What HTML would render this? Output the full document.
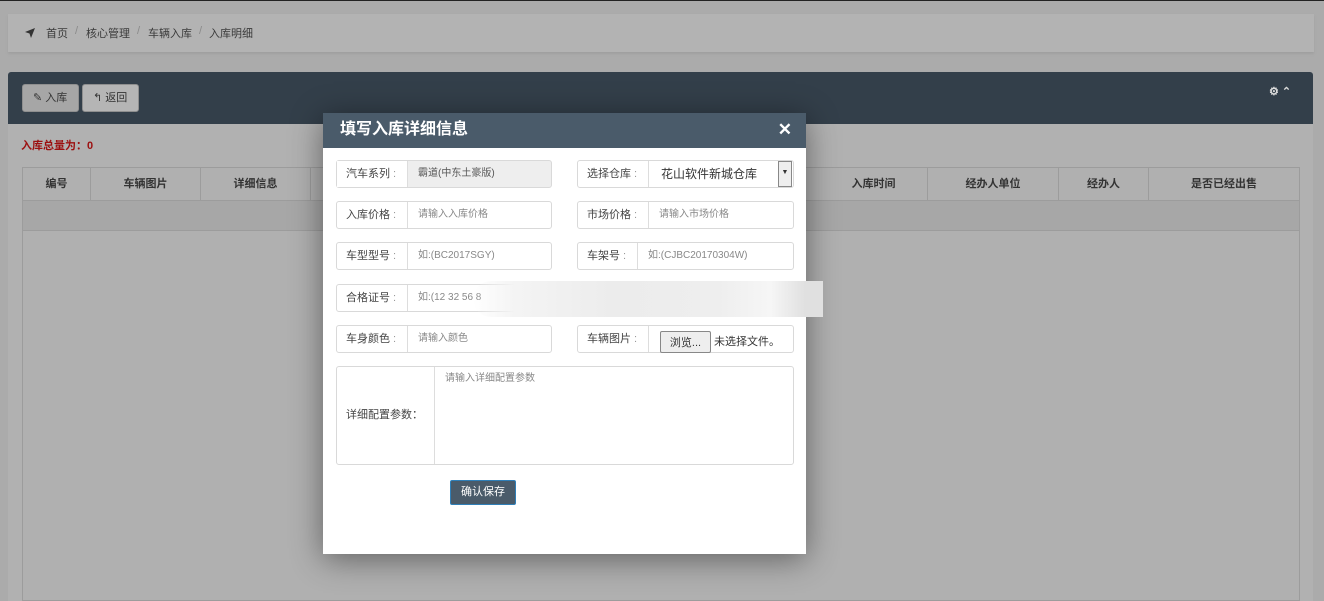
<!DOCTYPE html>
<html><head><meta charset="utf-8"><style>
*{box-sizing:border-box;margin:0;padding:0}
body{width:1324px;height:601px;overflow:hidden;background:#ababab;font-family:"Liberation Sans","Noto Sans CJK SC",sans-serif;font-size:12px;color:#333;position:relative}
.a{position:absolute}
.topline{left:0;top:0;width:1324px;height:1px;background:#222}
.bc{left:8px;top:14px;width:1306px;height:38px;background:#b3b3b3;box-shadow:0 2px 2px #a0a0a0}
.bc span{position:absolute;top:11px;font-size:11px;color:#3a3a3a;white-space:nowrap}
.bc .s{color:#8a8a8a}
.ph{left:8px;top:72px;width:1305px;height:52px;background:#333f4a;border-radius:3px 3px 0 0}
.pb{left:8px;top:124px;width:1305px;height:477px;background:#b1b1b1}
.btn{position:absolute;top:84px;height:28px;border:1px solid #8f8f8f;border-radius:3px;background:#b5b5b5;font-size:11px;color:#333;line-height:26px;padding-left:10px;white-space:nowrap}
.tot{left:21px;top:137px;color:#9c1010;font-weight:bold;font-size:11px}
.tbl{left:22px;top:167px;width:1278px;height:434px;border:1px solid #9c9c9c;background:#b0b0b0}
.th{position:absolute;top:0;height:32px;line-height:32px;text-align:center;font-weight:bold;color:#333;border-right:1px solid #9c9c9c;font-size:11px}
.row1{left:0;top:32px;width:1276px;height:31px;background:#a7a7a7;border-top:1px solid #9c9c9c;border-bottom:1px solid #9c9c9c}
.modal{left:323px;top:113px;width:483px;height:441px;background:#fff;box-shadow:0 5px 30px rgba(0,0,0,.45)}
.mh{left:0;top:0;width:483px;height:35px;background:#4a5b6a;color:#fff;font-size:16px;font-weight:bold;line-height:34px;padding-left:17px}
.x{right:14px;top:7px;color:#fff;font-size:17px;font-weight:bold;line-height:20px}
.ig{position:absolute;height:28px;border:1px solid #d9d9d9;border-radius:3px;background:#fff}
.lab{position:absolute;left:0;top:0;height:26px;border-right:1px solid #ddd;line-height:26px;font-size:11px;color:#444;padding-left:9px;white-space:nowrap}
.lab i{font-style:normal;color:#999}
.val{position:absolute;top:0;height:26px;line-height:26px;font-size:10px;color:#888;padding-left:10px;white-space:nowrap}
</style></head><body>
<div class="a topline"></div>
<div class="a bc">
<svg class="a" style="left:16px;top:13px" width="12" height="12" viewBox="0 0 12 12"><path d="M11 1L1 5l4.5 1.5L7 11z" fill="#333"/></svg>
<span style="left:38px">首页</span><span class="s" style="left:67px">/</span>
<span style="left:78px">核心管理</span><span class="s" style="left:129px">/</span>
<span style="left:140px">车辆入库</span><span class="s" style="left:191px">/</span>
<span style="left:201px">入库明细</span>
</div>
<div class="a ph"></div>
<div class="a pb"></div>
<div class="btn" style="left:22px;width:57px;background:#a6a6a6">✎ 入库</div>
<div class="btn" style="left:82px;width:57px">↰ 返回</div>
<div class="a" style="left:1269px;top:85px;color:#ddd;font-size:11px;font-weight:bold">⚙ ⌃</div>
<div class="a tot">入库总量为：0</div>
<div class="a tbl">
<div class="th" style="left:0;width:68px">编号</div>
<div class="th" style="left:68px;width:110px">车辆图片</div>
<div class="th" style="left:178px;width:110px">详细信息</div>
<div class="th" style="left:797px;width:108px">入库时间</div>
<div class="th" style="left:905px;width:131px">经办人单位</div>
<div class="th" style="left:1036px;width:90px">经办人</div>
<div class="th" style="left:1126px;width:150px;border-right:0">是否已经出售</div>
<div class="a row1"></div>
</div>
<div class="a modal">
<div class="a mh">填写入库详细信息</div>
<div class="a x">✕</div>
<div class="ig" style="left:13px;top:47px;width:216px;background:#eee"><div class="lab" style="width:71px;background:#fff">汽车系列<i> :</i></div><div class="val" style="left:71px;color:#555">霸道(中东土豪版)</div></div>
<div class="ig" style="left:254px;top:47px;width:217px"><div class="lab" style="width:71px">选择仓库<i> :</i></div><div class="val" style="left:73px;font-size:12px;color:#333">花山软件新城仓库</div><div class="a" style="right:1px;top:0;width:14px;height:26px;border:1px solid #888;background:#eee;font-size:7px;text-align:center;line-height:22px">▼</div></div>
<div class="ig" style="left:13px;top:88px;width:216px"><div class="lab" style="width:71px">入库价格<i> :</i></div><div class="val" style="left:71px">请输入入库价格</div></div>
<div class="ig" style="left:254px;top:88px;width:217px"><div class="lab" style="width:71px">市场价格<i> :</i></div><div class="val" style="left:71px">请输入市场价格</div></div>
<div class="ig" style="left:13px;top:129px;width:216px"><div class="lab" style="width:71px">车型型号<i> :</i></div><div class="val" style="left:71px">如:(BC2017SGY)</div></div>
<div class="ig" style="left:254px;top:129px;width:217px"><div class="lab" style="width:60px">车架号<i> :</i></div><div class="val" style="left:60px">如:(CJBC20170304W)</div></div>
<div class="ig" style="left:13px;top:171px;width:216px"><div class="lab" style="width:71px">合格证号<i> :</i></div><div class="val" style="left:71px">如:(12 32 56 8</div></div>
<div class="a" style="left:150px;top:168px;width:350px;height:36px;background:linear-gradient(90deg,rgba(255,255,255,0),#f4f4f4 12%,#ececec 40%,#eee 70%,#f6f6f6 85%,#e0e0e0 95%);border-radius:18px 0 0 18px"></div>
<div class="ig" style="left:13px;top:212px;width:216px"><div class="lab" style="width:71px">车身颜色<i> :</i></div><div class="val" style="left:71px">请输入颜色</div></div>
<div class="ig" style="left:254px;top:212px;width:217px"><div class="lab" style="width:71px">车辆图片<i> :</i></div><div class="a" style="left:82px;top:5px;width:51px;height:22px;border:1px solid #888;border-radius:2px;background:#eee;font-size:11px;line-height:22px;text-align:center">浏览...</div><div class="val" style="left:126px;top:3px;font-size:11px;color:#333">未选择文件。</div></div>
<div class="ig" style="left:13px;top:253px;width:458px;height:99px"><div class="lab" style="width:98px;height:97px;line-height:97px">详细配置参数：</div><div class="val" style="left:98px;top:3px;line-height:18px;font-size:10px">请输入详细配置参数</div></div>
<div class="a" style="left:127px;top:367px;width:66px;height:25px;background:#4a5b6a;border:1px solid #2f7fb8;border-radius:2px;color:#fff;font-size:11px;text-align:center;line-height:23px">确认保存</div>
</div>
</body></html>
